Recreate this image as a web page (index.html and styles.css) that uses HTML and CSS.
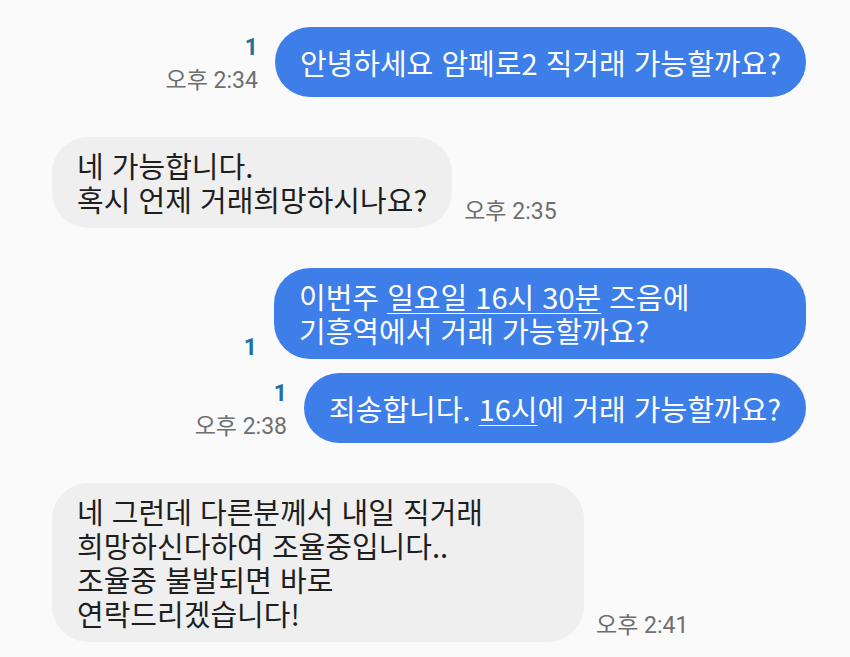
FILE: index.html
```html
<!DOCTYPE html>
<html lang="ko">
<head>
  <meta charset="UTF-8" />
  <title>메시지</title>
  <link rel="stylesheet" href="styles.css">
</head>
<body>
  <div class="chat">
    <div class="row sent first">
      <div class="meta">
        <span class="unread">1</span>
        <span class="time">오후 2:34</span>
      </div>
      <div class="bubble single">안녕하세요 암페로2 직거래 가능할까요?</div>
    </div>

    <div class="row received">
      <div class="bubble">네 가능합니다.<br>혹시 언제 거래희망하시나요?</div>
      <span class="time">오후 2:35</span>
    </div>

    <div class="row sent">
      <div class="meta solo">
        <span class="unread">1</span>
      </div>
      <div class="bubble wide">이번주 <u>일요일 16시 30분</u> 즈음에<br>기흥역에서 거래 가능할까요?</div>
    </div>

    <div class="row sent tight">
      <div class="meta">
        <span class="unread">1</span>
        <span class="time">오후 2:38</span>
      </div>
      <div class="bubble single">죄송합니다. <u>16시</u>에 거래 가능할까요?</div>
    </div>

    <div class="row received">
      <div class="bubble wide">네 그런데 다른분께서 내일 직거래<br>희망하신다하여 조율중입니다..<br>조율중 불발되면 바로<br>연락드리겠습니다!</div>
      <span class="time">오후 2:41</span>
    </div>
  </div>
</body>
</html>
```

FILE: styles.css
```css
body {
  margin: 0;
  background-color: #fafafa;
  font-family: "Noto Sans CJK KR", "Noto Sans", sans-serif;
  color: #222222;
}
.chat {
  display: flex;
  flex-direction: column;
  padding: 27px 44px 0 52px;
}
.row {
  display: flex;
  align-items: flex-end;
  margin-top: 40px;
}
.row.first {
  margin-top: 0;
}
.row.tight {
  margin-top: 14px;
}
.row.sent {
  justify-content: flex-end;
}
.bubble {
  font-size: 29px;
  line-height: 34px;
  padding: 11px 25px 12px;
  border-radius: 36px;
  white-space: nowrap;
}
.bubble.single {
  padding-top: 18px;
  padding-bottom: 18px;
}
.bubble.wide {
  box-sizing: border-box;
  width: 532px;
}
.sent .bubble {
  background-color: #3d7ee9;
  color: #ffffff;
}
.received .bubble {
  background-color: #efefef;
  color: #1e1e1e;
}
.bubble u {
  text-decoration-thickness: 1px;
  text-underline-offset: 4px;
}
.meta {
  display: flex;
  flex-direction: column;
  align-items: flex-end;
  margin-right: 17px;
}
.unread {
  font-family: "Roboto", "Noto Sans CJK KR", sans-serif;
  font-weight: 700;
  font-size: 23px;
  line-height: 33px;
  color: #22719f;
}
.meta.solo .unread {
  line-height: 23px;
}
.time {
  font-family: "Roboto", "Noto Sans CJK KR", sans-serif;
  font-size: 23px;
  line-height: 33px;
  color: #6e6e6e;
}
.received .time {
  margin-left: 12px;
}
```
